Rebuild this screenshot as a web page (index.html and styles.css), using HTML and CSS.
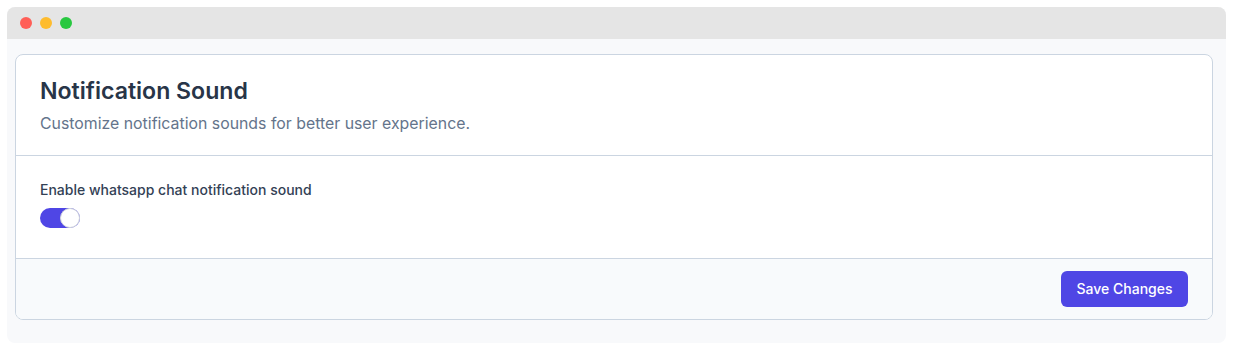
FILE: index.html
```html
<!DOCTYPE html>
<html lang="en">
<head>
  <meta charset="UTF-8" />
  <meta name="viewport" content="width=device-width, initial-scale=1" />
  <title>Notification Sound</title>
  <link rel="stylesheet" href="styles.css">
</head>
<body>
  <div class="window">
    <div class="titlebar">
      <span class="dot red"></span>
      <span class="dot yellow"></span>
      <span class="dot green"></span>
    </div>
    <div class="content">
      <div class="card">
        <div class="card-header">
          <h2>Notification Sound</h2>
          <p>Customize notification sounds for better user experience.</p>
        </div>
        <div class="card-body">
          <label class="field-label">Enable whatsapp chat notification sound</label>
          <button class="toggle on" onclick="this.classList.toggle('on')"><span class="knob"></span></button>
        </div>
        <div class="card-footer">
          <button class="save">Save Changes</button>
        </div>
      </div>
    </div>
  </div>
</body>
</html>
```

FILE: styles.css
```css
body {
  margin: 0;
  padding: 7px;
  background: #ffffff;
  font-family: Inter, "Noto Sans", sans-serif;
}
.window {
  background: #f8f9fb;
  border-radius: 8px;
  overflow: hidden;
}
.titlebar {
  height: 32px;
  background: #e5e5e5;
  display: flex;
  align-items: center;
  gap: 8px;
  padding-left: 13px;
}
.dot {
  width: 12px;
  height: 12px;
  border-radius: 50%;
}
.red { background: #ff5f57; }
.yellow { background: #febc2e; }
.green { background: #28c840; }
.content {
  padding: 15px 13px 23px 8px;
}
.card {
  background: #fff;
  border: 1px solid #cbd5e1;
  border-radius: 8px;
  overflow: hidden;
}
.card-header {
  padding: 20px 24px 19px;
  border-bottom: 1px solid #cbd5e1;
}
.card-header h2 {
  margin: 0;
  font-size: 23.1px;
  line-height: 32px;
  font-weight: 600;
  color: #283548;
}
.card-header p {
  margin: 5px 0 0;
  font-size: 15.85px;
  line-height: 24px;
  color: #64748b;
}
.card-body {
  padding: 24px 24px 30px;
  border-bottom: 1px solid #cbd5e1;
}
.field-label {
  display: block;
  font-size: 14px;
  line-height: 20px;
  font-weight: 500;
  color: #334155;
  margin-bottom: 8px;
}
.toggle {
  display: block;
  width: 40px;
  height: 20px;
  padding: 0;
  border: none;
  border-radius: 10px;
  background: #cbd5e1;
  position: relative;
  cursor: pointer;
}
.toggle.on { background: #4f46e5; }
.knob {
  position: absolute;
  top: 0;
  left: 0;
  width: 18px;
  height: 18px;
  border-radius: 50%;
  background: #fff;
  border: 1px solid #d1d5db;
  transition: left .15s;
}
.toggle.on .knob { left: 20px; }
.card-footer {
  background: #f8fafc;
  padding: 12px 24px;
  display: flex;
  justify-content: flex-end;
}
.save {
  background: #4f46e5;
  color: #fff;
  border: none;
  border-radius: 6px;
  padding: 0 15.5px 1px;
  height: 36px;
  font-family: inherit;
  font-size: 14px;
  font-weight: 500;
  cursor: pointer;
}
```
